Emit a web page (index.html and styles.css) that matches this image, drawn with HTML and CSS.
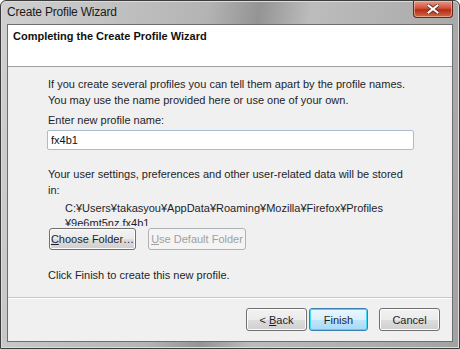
FILE: index.html
```html
<!DOCTYPE html>
<html lang="en">
<head>
    <meta charset="UTF-8">
    <title>Create Profile Wizard</title>
    <link rel="stylesheet" href="styles.css">
</head>
<body>
<div class="window">
    <div class="titlebar">
        <span class="title">Create Profile Wizard</span>
        <button class="close" title="Close">
            <svg width="12" height="10" viewBox="0 0 12 10">
                <path d="M1.5 1.5 L10.5 8.5 M10.5 1.5 L1.5 8.5" stroke="#5a2a20" stroke-width="3.6" stroke-linecap="square"/>
                <path d="M1.5 1.5 L10.5 8.5 M10.5 1.5 L1.5 8.5" stroke="#fff" stroke-width="2" stroke-linecap="square"/>
            </svg>
        </button>
    </div>
    <div class="client">
        <div class="header">Completing the Create Profile Wizard</div>
        <div class="body">
            <p class="intro">If you create several profiles you can tell them apart by the profile names.<br>You may use the name provided here or use one of your own.</p>
            <label class="field-label" for="profileName">Enter new profile name:</label>
            <input id="profileName" class="name-input" type="text" value="fx4b1">
            <p class="store-note">Your user settings, preferences and other user-related data will be stored in:</p>
            <div class="path">C:¥Users¥takasyou¥AppData¥Roaming¥Mozilla¥Firefox¥Profiles<br>¥9e6mt5nz.fx4b1</div>
            <div class="folder-buttons">
                <button class="btn choose"><u>C</u>hoose Folder…</button>
                <button class="btn default-folder" disabled><u>U</u>se Default Folder</button>
            </div>
            <p class="finish-note">Click Finish to create this new profile.</p>
        </div>
        <div class="footer">
            <button class="btn nav back">&lt; <u>B</u>ack</button>
            <button class="btn nav default">Finish</button>
            <button class="btn nav cancel">Cancel</button>
        </div>
    </div>
</div>
</body>
</html>
```

FILE: styles.css
```css
html, body {
    margin: 0;
    padding: 0;
    background: #fff;
}

body {
    width: 460px;
    height: 349px;
    font-family: "Liberation Sans", Arial, sans-serif;
    font-size: 11px;
    color: #1e1e28;
}

.window {
    box-sizing: border-box;
    width: 460px;
    height: 349px;
    border: 1px solid #3c3c3c;
    border-radius: 6px 6px 0 0;
    background: linear-gradient(100deg, #d0d0d0 0%, #b4b4b4 40%, #949494 50%, #bcbcbc 60%, #a2a2a2 100%);
    padding: 0 6px 6px 6px;
    display: flex;
    flex-direction: column;
    box-shadow: inset 0 0 0 1px #dcdcdc;
}

.titlebar {
    height: 23px;
    display: flex;
    align-items: flex-start;
    justify-content: space-between;
}

.title {
    font-size: 12px;
    color: #1a1a1a;
    padding-top: 4px;
    letter-spacing: -0.2px;
}

.close {
    width: 40px;
    height: 17px;
    border: 1px solid #5c2a20;
    border-top: none;
    border-radius: 0 0 4px 4px;
    background: linear-gradient(#e49a86 0%, #d2523a 45%, #b82a12 55%, #cf6a48 100%);
    padding: 0;
    display: flex;
    align-items: center;
    justify-content: center;
    box-shadow: inset 0 0 0 1px rgba(255, 220, 200, 0.5);
}

.client {
    flex: 1;
    display: flex;
    flex-direction: column;
    border: 1px solid #6e6e6e;
    background: #f0f0f0;
}

.header {
    height: 42px;
    background: #fff;
    border-bottom: 1px solid #a0a0a0;
    font-weight: bold;
    font-size: 11px;
    padding: 5px 0 0 5px;
    box-sizing: border-box;
    color: #111;
}

.body {
    flex: 1;
    padding: 9px 0 0 40px;
    border-bottom: 1px solid #c8c8c8;
    box-shadow: 0 1px 0 #fff;
}

.intro {
    margin: 0;
    line-height: 16px;
}

.field-label {
    display: block;
    margin-top: 4px;
    line-height: 16px;
}

.name-input {
    box-sizing: border-box;
    width: 367px;
    height: 20px;
    margin: 2px 0 0 -1px;
    border: 1px solid #a9bccd;
    border-radius: 2px;
    padding: 0 3px;
    font-family: inherit;
    font-size: 11px;
    color: #111;
    background: #fff;
}

.store-note {
    margin: 16px 0 0 0;
    width: 360px;
    line-height: 16px;
}

.path {
    margin: 3px 0 0 17px;
    height: 25px;
    line-height: 15px;
    overflow: hidden;
    white-space: nowrap;
}

.folder-buttons {
    display: flex;
    gap: 12px;
    margin-top: 2px;
}

.btn {
    box-sizing: border-box;
    height: 22px;
    padding: 0;
    font-family: inherit;
    font-size: 11px;
    white-space: nowrap;
    color: #1e1e28;
    border: 1px solid #707070;
    border-radius: 3px;
    background: linear-gradient(#f2f2f2 0%, #ebebeb 50%, #dddddd 51%, #cfcfcf 100%);
    box-shadow: inset 0 0 0 1px #fcfcfc;
}

.btn[disabled] {
    color: #a0a0a0;
    border-color: #adb2b5;
    background: #f4f4f4;
    box-shadow: none;
}

.btn.choose {
    width: 87px;
    margin-left: 1px;
}

.btn.default-folder {
    width: 98px;
}

.finish-note {
    margin: 19px 0 0 0;
}

.footer {
    height: 43px;
    display: flex;
    justify-content: flex-end;
    align-items: center;
    gap: 2px;
    padding-right: 12px;
}

.btn.nav {
    width: 61px;
    height: 23px;
}

.btn.default {
    width: 59px;
    border-color: #3c7fb1;
    box-shadow: inset 0 0 0 1px #48d7fa;
    background: linear-gradient(#eaf6fd 0%, #d9f0fc 50%, #bee6fd 51%, #a7d9f5 100%);
}

.btn.cancel {
    margin-left: 9px;
}
```
